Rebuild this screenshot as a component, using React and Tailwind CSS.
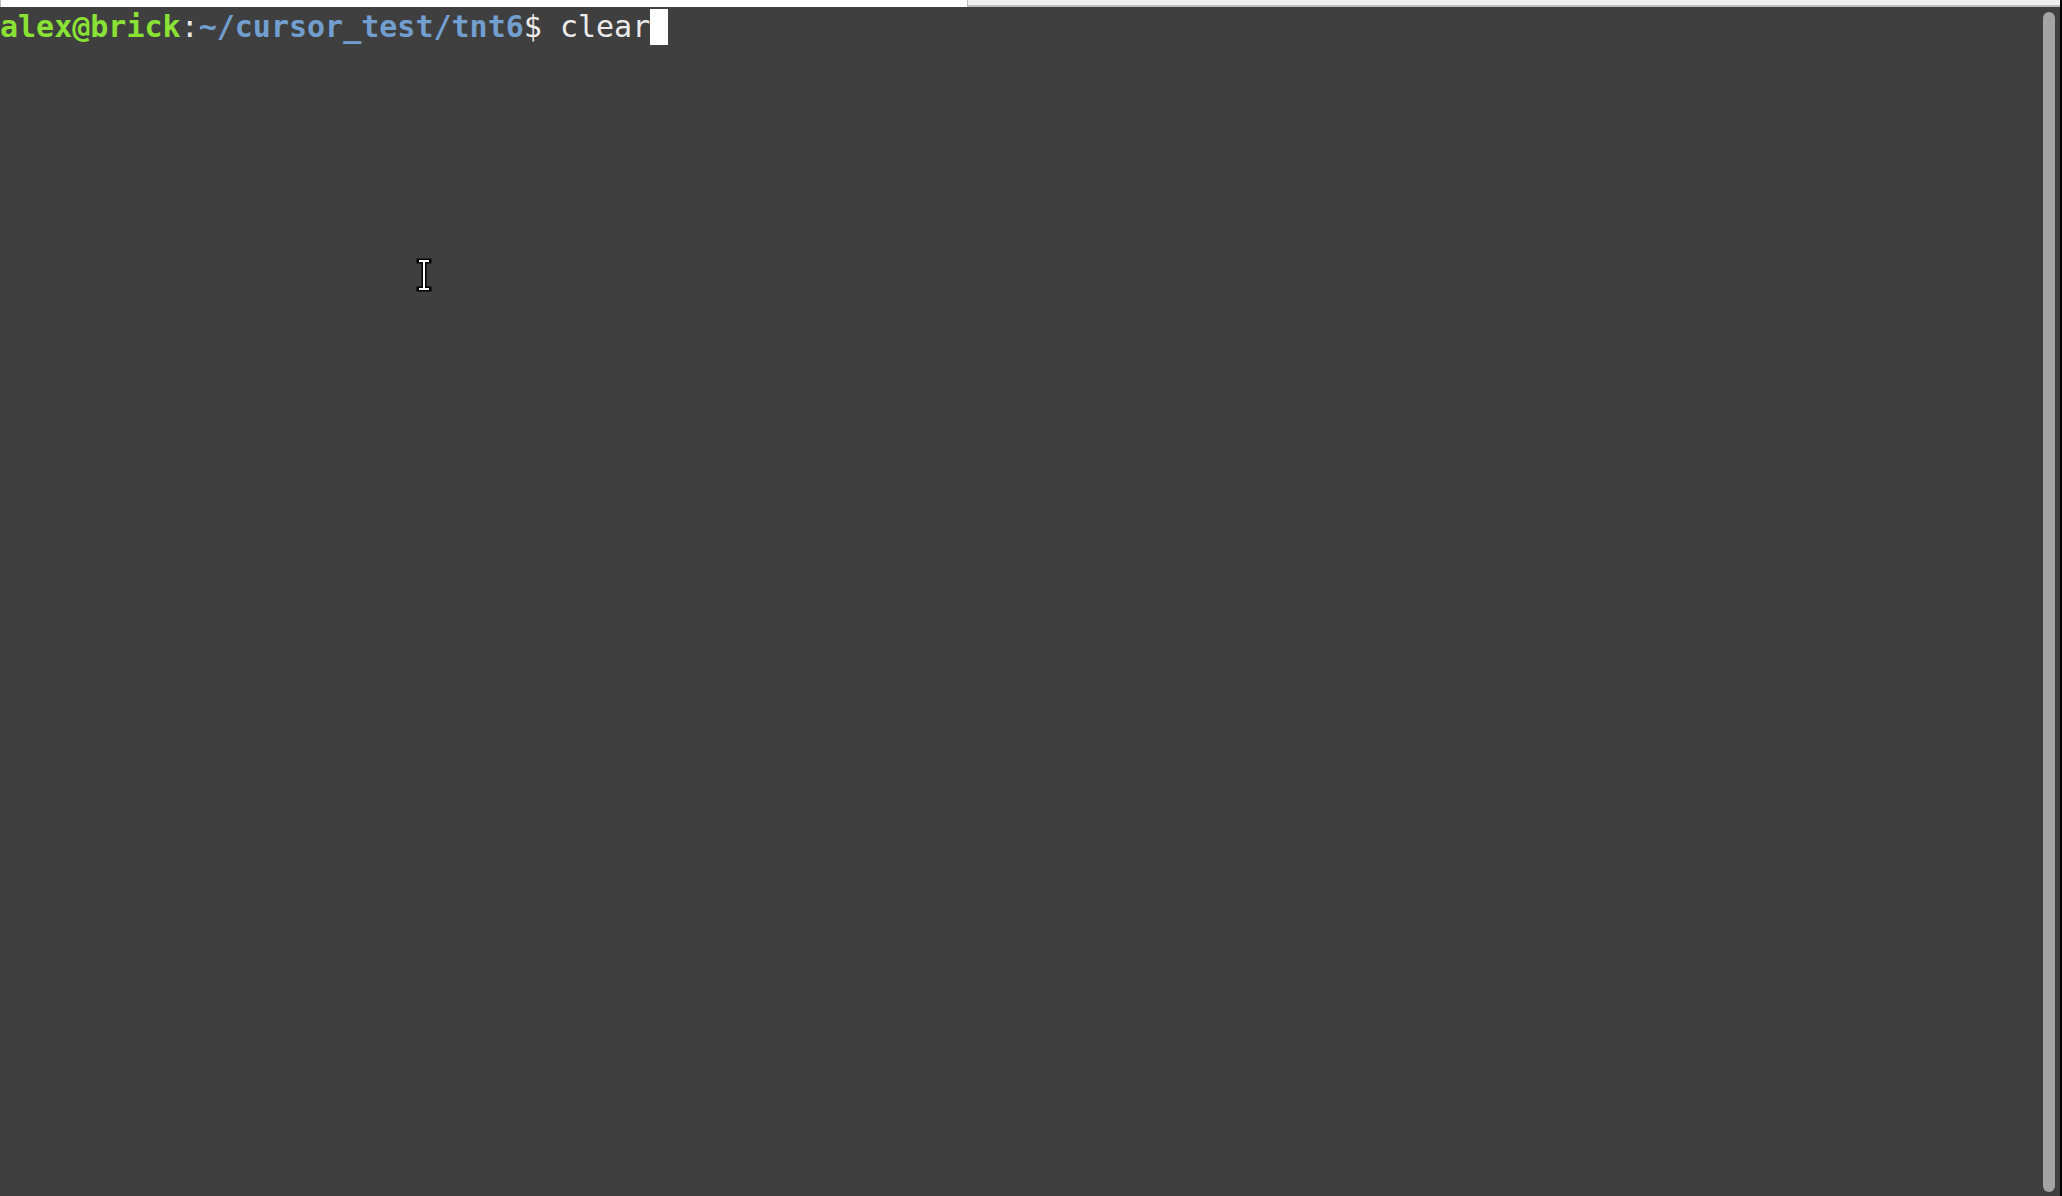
import React from "react";

const mono = { fontFamily: '"DejaVu Sans Mono", "Liberation Mono", monospace' };

function IBeam() {
  return (
    <svg width="18" height="36" viewBox="0 0 18 36" className="block">
      <path d="M4 4h10M4 32h10M9 4v28" stroke="#000" strokeWidth="5" strokeLinecap="square" fill="none" />
      <path d="M5 4h8M5 32h8M9 4v28" stroke="#fff" strokeWidth="2" strokeLinecap="square" fill="none" />
    </svg>
  );
}

export default function App() {
  return (
    <div className="w-full h-screen flex flex-col bg-[#3f3f3f] border-r-2 border-black overflow-hidden">
      <div className="flex h-[7px] shrink-0">
        <div className="w-[967px] bg-white border-l border-[#bdbdbd]" />
        <div className="flex-1 bg-[#efefef] border-l border-[#bdbdbd] border-b-2 border-b-[#bcbcbc]" />
      </div>

      <div className="flex flex-1 min-h-0">
        <div className="flex-1 relative pt-[2px] text-[30px] leading-[36px] whitespace-pre" style={mono}>
          <div className="flex items-start">
            <span className="font-bold text-[#8ae234]">alex@brick</span>
            <span className="text-[#e8e8e8]">:</span>
            <span className="font-bold text-[#729fcf]">~/cursor_test/tnt6</span>
            <span className="text-[#ececec]">$ clear</span>
            <span className="inline-block w-[18px] h-[36px] bg-white" />
          </div>

          <div className="absolute left-[415px] top-[250px]">
            <IBeam />
          </div>
        </div>

        <div className="w-[17px] shrink-0 pt-[5px] pb-[4px] pr-[5px] flex">
          <div className="w-[12px] h-full rounded-full bg-[#a4a4a4]" />
        </div>
      </div>
    </div>
  );
}
